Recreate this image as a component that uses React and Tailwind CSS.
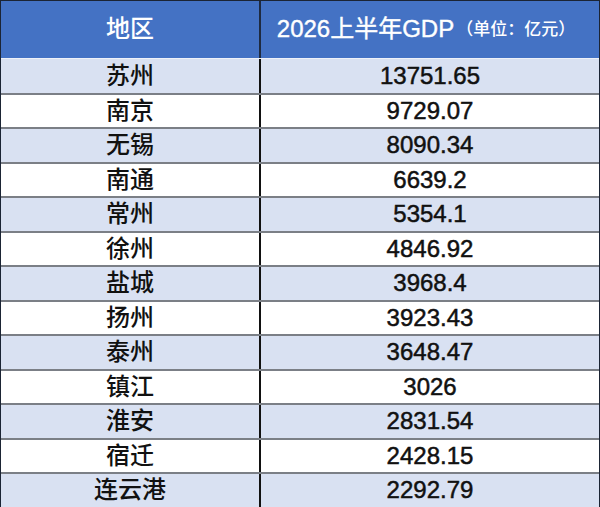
import React from "react";

const rows = [
  ["苏州", "13751.65"],
  ["南京", "9729.07"],
  ["无锡", "8090.34"],
  ["南通", "6639.2"],
  ["常州", "5354.1"],
  ["徐州", "4846.92"],
  ["盐城", "3968.4"],
  ["扬州", "3923.43"],
  ["泰州", "3648.47"],
  ["镇江", "3026"],
  ["淮安", "2831.54"],
  ["宿迁", "2428.15"],
  ["连云港", "2292.79"],
];

const font = { fontFamily: '"Liberation Sans", "Noto Sans CJK SC", sans-serif' };

export default function App() {
  return (
    <div className="w-[600px] h-[507px] overflow-hidden bg-white" style={font}>
      <div className="border-t border-l border-r border-[#1b2434]">
        <div className="flex h-[57px] bg-[#4472c4] text-white">
          <div className="w-[260px] flex items-center justify-center border-r-2 border-[#1e2a40] text-[24px] font-medium pb-[2px]">
            地区
          </div>
          <div className="flex-1 flex items-center justify-center pr-[8px] pb-[2px]">
            <span className="text-[24px] [-webkit-text-stroke:0.4px_#fff]">2026上半年GDP</span>
            <span className="text-[17px] font-medium ml-[2px] mt-[2px]">（单位：亿元）</span>
          </div>
        </div>
        {rows.map(([city, gdp], i) => (
          <div
            key={city}
            className={`flex h-[34.5px] text-[#111] ${
              i % 2 === 0 ? "bg-[#d9e1f2]" : "bg-white"
            } ${i === 0 ? "border-t border-[#eef1f8]" : "border-t-2 border-[#7b7f86]"}`}
          >
            <div className="w-[260px] flex items-center justify-center border-r-2 border-[#111] text-[24px] font-medium">
              {city}
            </div>
            <div className="flex-1 flex items-center justify-center text-[24px] [-webkit-text-stroke:0.5px_#111]">
              {gdp}
            </div>
          </div>
        ))}
      </div>
    </div>
  );
}
